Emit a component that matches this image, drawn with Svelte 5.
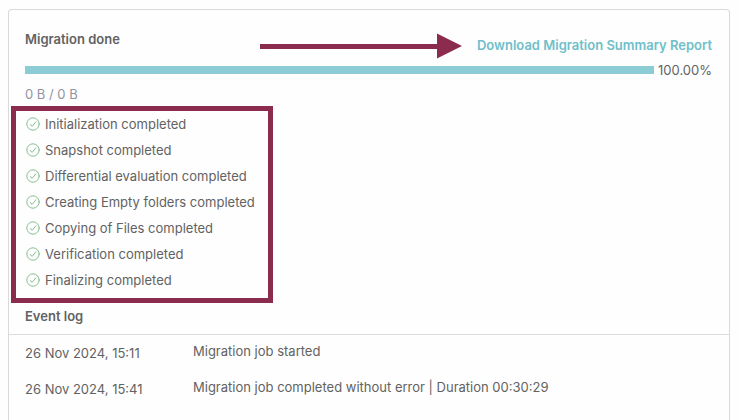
<script lang="ts">
  type LogEntry = { date: string; message: string };

  let percent = $state(100);

  const steps: string[] = [
    "Initialization completed",
    "Snapshot completed",
    "Differential evaluation completed",
    "Creating Empty folders completed",
    "Copying of Files completed",
    "Verification completed",
    "Finalizing completed",
  ];

  const events: LogEntry[] = [
    { date: "26 Nov 2024, 15:11", message: "Migration job started" },
    {
      date: "26 Nov 2024, 15:41",
      message: "Migration job completed without error | Duration 00:30:29",
    },
  ];
</script>

<main class="card">
  <section class="summary">
    <header>
      <h2>Migration done</h2>
      <svg class="arrow" width="202" height="26" viewBox="0 0 202 26" aria-hidden="true">
        <path d="M0 11H177V0.500L202 13L177 25.500V16H0Z" />
      </svg>
      <a href="#report">Download Migration Summary Report</a>
    </header>

    <div class="progress">
      <div
        class="track"
        role="progressbar"
        aria-label="Migration progress"
        aria-valuenow={percent}
      >
        <div class="fill" style="width: {percent}%"></div>
      </div>
      <span>{percent.toFixed(2)}%</span>
    </div>
    <p class="bytes">0 B / 0 B</p>

    <ul class="steps">
      {#each steps as step}
        <li>
          <svg width="14" height="14" viewBox="0 0 14 14" aria-hidden="true">
            <circle cx="7" cy="7" r="6.200" />
            <path d="M4.200 7.500L6.200 9.300L9.900 4.800" />
          </svg>
          {step}
        </li>
      {/each}
    </ul>
  </section>

  <h2 class="log-title">Event log</h2>
  <table>
    <tbody>
      {#each events as event}
        <tr>
          <td class="date">{event.date}</td>
          <td>{event.message}</td>
        </tr>
      {/each}
    </tbody>
  </table>
</main>

<style>
  :global(body) {
    background: #fefefe;
  }
  .card {
    box-sizing: border-box;
    margin: 9px 10px 0 8px;
    min-height: calc(100vh - 9px);
    border: 1px solid #d9d9dc;
    border-bottom: none;
    border-radius: 4px 4px 0 0;
    color: #626262;
    font-family: Inter, "Liberation Sans", sans-serif;
    font-size: 13px;
    line-height: 20px;
  }
  .summary {
    padding: 19px 17px 0 16px;
  }
  header {
    display: flex;
    align-items: flex-start;
    padding-bottom: 1px;
  }
  h2 {
    margin: 0;
    font-size: 13px;
    font-weight: 600;
  }
  .arrow {
    margin: 4px 15px 0 auto;
    fill: #8b2c4f;
  }
  a {
    padding-top: 6px;
    color: #6fbfca;
    font-weight: 600;
    text-decoration: none;
  }
  .progress {
    display: flex;
    align-items: center;
    gap: 4px;
  }
  .track {
    flex: 1;
    height: 8px;
    background: #e8e8e8;
  }
  .fill {
    height: 100%;
    background: #8ccdd5;
  }
  .bytes {
    margin: 4px 0 2px;
    color: #9294a3;
  }
  .steps {
    width: fit-content;
    margin: 0 0 0 -14px;
    padding: 0 13px 5px 10px;
    border: 5px solid #8b2c4f;
    list-style: none;
  }
  li {
    display: flex;
    align-items: center;
    gap: 5px;
    line-height: 26px;
  }
  li svg {
    fill: none;
    stroke: #85bf91;
    stroke-linecap: round;
    stroke-linejoin: round;
  }
  .log-title {
    padding: 3px 16px 8px;
    border-bottom: 1px solid #dddde0;
  }
  table {
    width: 100%;
    border-collapse: collapse;
  }
  td {
    padding: 6px 16px 10px 0;
    vertical-align: top;
  }
  .date {
    box-sizing: border-box;
    width: 184px;
    padding: 8px 0 8px 16px;
  }
</style>
